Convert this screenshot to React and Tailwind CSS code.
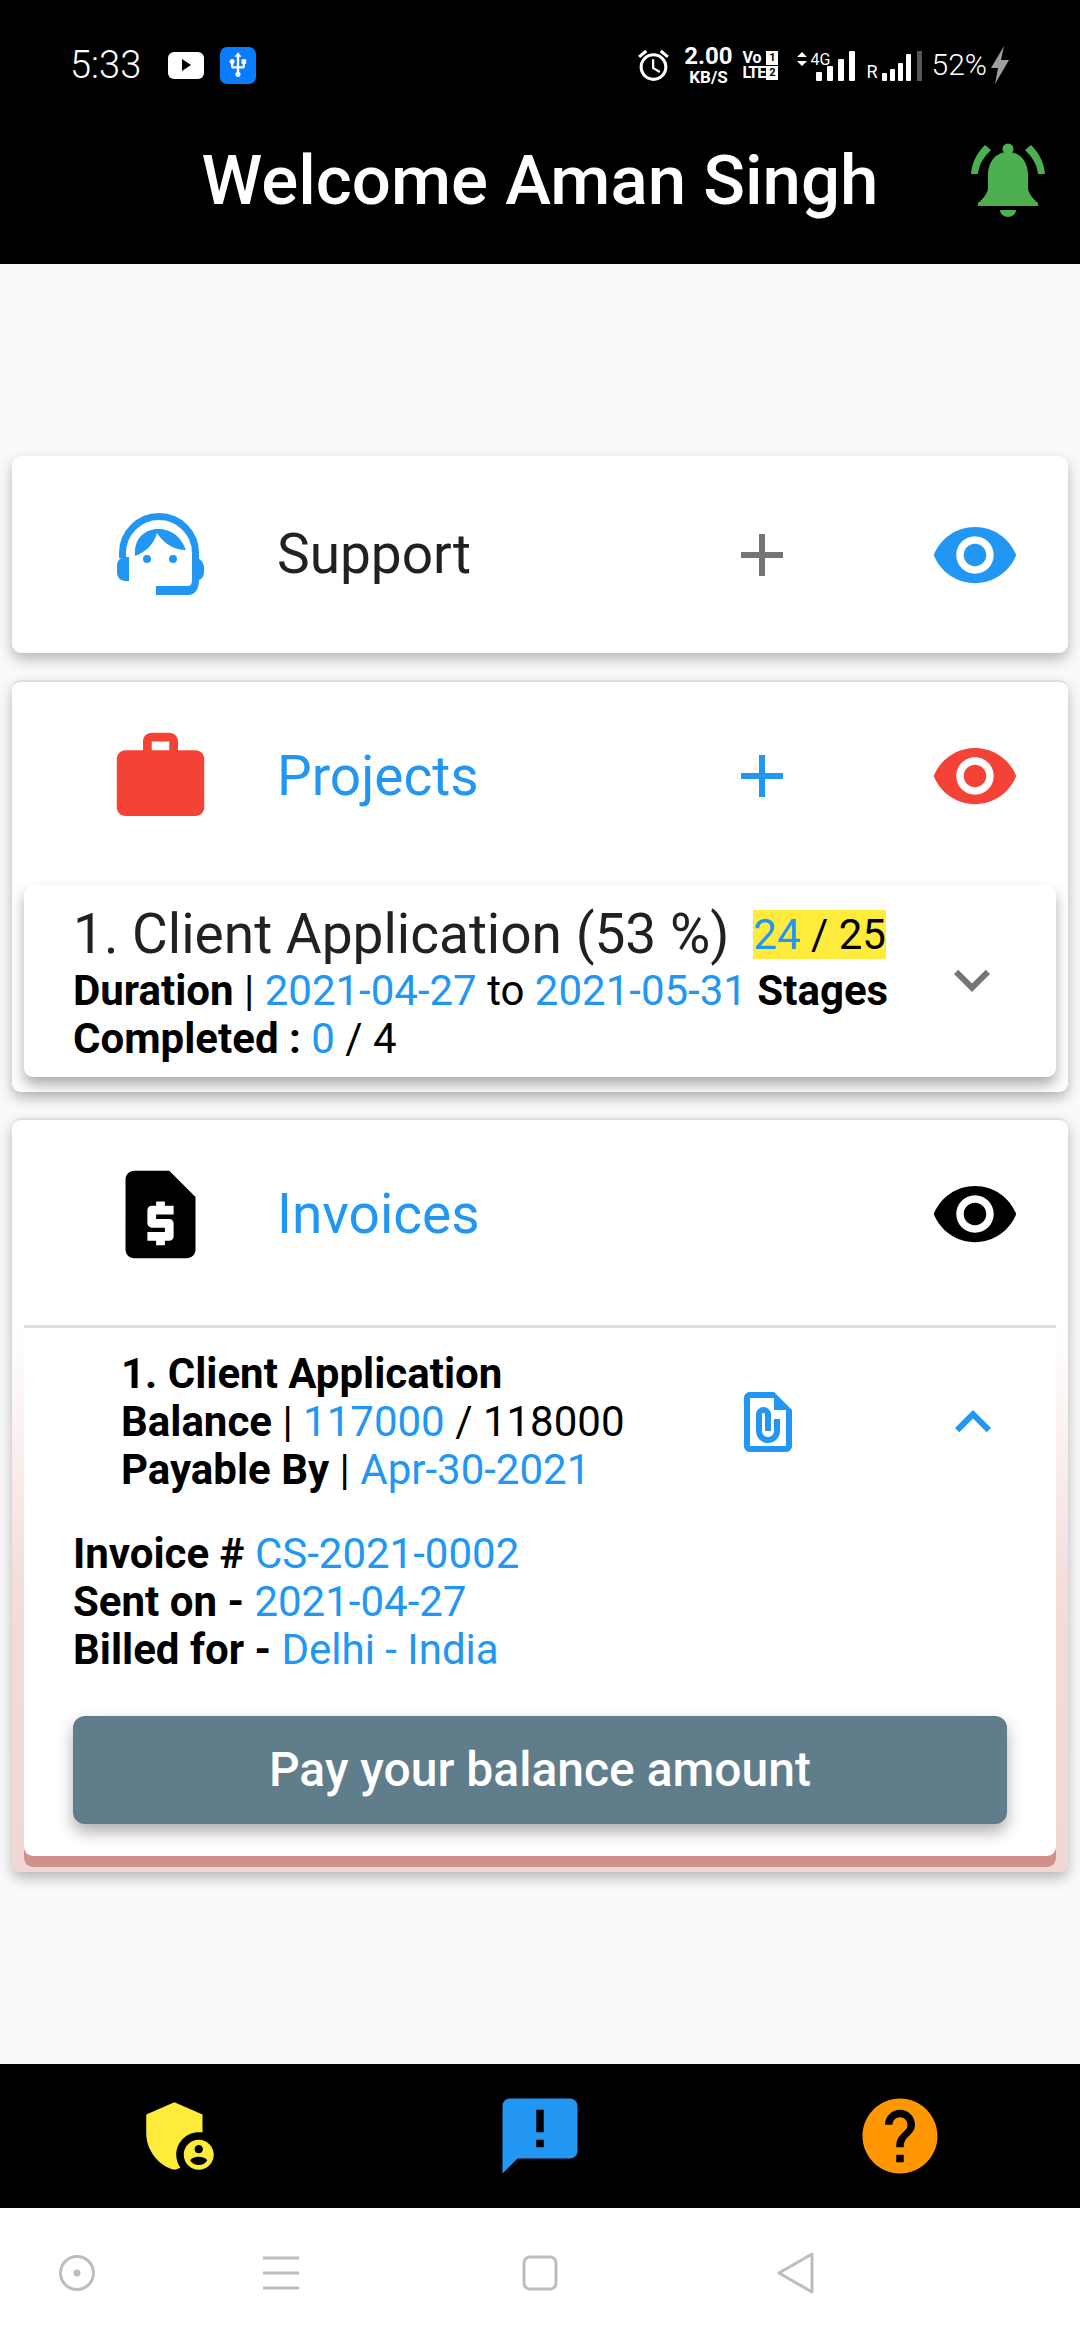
import React from 'react';
import {
  MdAdd,
  MdAdminPanelSettings,
  MdAnnouncement,
  MdExpandLess,
  MdExpandMore,
  MdHelp,
  MdOutlineAlarm,
  MdOutlineFilePresent,
  MdUsb,
  MdVisibility,
  MdWork,
} from 'react-icons/md';

const Bars = ({ heights, wide }) => (
  <div className={`flex items-end ${wide ? 'gap-[5px]' : 'gap-[3px]'}`}>
    {heights.map((h, i) => (
      <div key={i} className={`${wide ? 'w-[6px]' : 'w-[5px]'} bg-white rounded-[1px]`} style={{ height: h }} />
    ))}
  </div>
);

const StatusBar = () => (
  <div className="h-[96px] pt-[34px] pl-[70px] pr-[70px] flex items-center text-white">
    <span className="text-[38px] leading-none w-[98px] font-light">5:33</span>
    <div className="w-[36px] h-[27px] bg-white rounded-[6px] flex items-center justify-center">
      <div className="w-0 h-0 border-y-[6px] border-y-transparent border-l-[9px] border-l-black" />
    </div>
    <div className="w-[36px] h-[37px] ml-[16px] bg-[#0a7cff] rounded-[7px] flex items-center justify-center">
      <MdUsb size={28} />
    </div>
    <div className="flex-1" />
    <MdOutlineAlarm size={37} />
    <div className="ml-[9px] w-[54px] flex flex-col items-center font-bold leading-none">
      <span className="text-[24px]">2.00</span>
      <span className="text-[17px] mt-[1px]">KB/S</span>
    </div>
    <div className="ml-[7px] w-[36px] flex flex-col font-bold text-[16px] leading-[15px]">
      <div className="flex justify-between items-center">
        <span>Vo</span>
        <span className="bg-white text-black w-[12px] h-[14px] text-[11px] leading-[14px] text-center">1</span>
      </div>
      <div className="flex justify-between items-center">
        <span className="tracking-[-1px]">LTE</span>
        <span className="bg-white text-black w-[12px] h-[14px] text-[11px] leading-[14px] text-center">2</span>
      </div>
    </div>
    <div className="ml-[38px] mt-[2px] flex items-end">
      <div className="relative">
        <svg width="10" height="14" viewBox="0 0 10 14" fill="#ffffff" className="absolute left-[-19px] top-[1px]">
          <path d="M5 0 L10 5 H0 Z M5 14 L0 9 H10 Z" />
        </svg>
        <span className="absolute left-[-6px] top-[1px] text-[16px] leading-none">4G</span>
        <Bars heights={[9, 15, 22, 30]} wide />
      </div>
      <span className="ml-[11px] text-[18px] leading-none">R</span>
      <div className="ml-[4px]">
        <Bars heights={[8, 12, 18, 27]} />
      </div>
      <div className="w-[5px] h-[30px] bg-[#555555] ml-[6px]" />
    </div>
    <span className="ml-[10px] text-[30px] leading-none font-light">52%</span>
    <svg width="20" height="38" viewBox="0 0 20 38" className="ml-[3px]">
      <path d="M14 0 L1 22 H8 L5 38 L19 14 H11 Z" fill="#9e9e9e" />
    </svg>
  </div>
);

const SupportIcon = () => (
  <svg width="120" height="110" viewBox="0 0 120 110" fill="#2196f3">
    <path d="M22.5 58 V53 A36.5 36.5 0 0 1 95.5 53 V62" fill="none" stroke="#2196f3" strokeWidth="7" />
    <path d="M35 56 C34 40 42 31 56 29 C70 28 81 36 86 50 C75 50 65 45 57 33 C54 44 46 52 35 56 Z" />
    <circle cx="47" cy="59" r="4" />
    <circle cx="73" cy="59" r="4" />
    <path d="M29 57 V81 H26 C20 81 17 77 17 72 V66 C17 60 21 57 26 57 Z" />
    <path d="M92 57 C99 57 104 61 104 68 V72 C104 76 102 79 99 80 C99 89 95 95 88 95 H56 V86 H88 C91 86 92 83 92 80 Z" />
  </svg>
);

const BellIcon = () => (
  <svg width="110" height="110" viewBox="0 0 110 110" fill="#4caf50">
    <circle cx="58" cy="19" r="5.5" />
    <path d="M58 22 C45 22 38 33 38 45 V58 C38 63 32 70 28 73 V76 H88 V73 C84 70 78 63 78 58 V45 C78 33 71 22 58 22 Z" />
    <path d="M50 80 H66 C66 84 62 87 58 87 C54 87 50 84 50 80 Z" />
    <path d="M35 15 L41 20 C34 27 29 34 28 44 H21 C22 32 27 23 35 15 Z" />
    <path d="M81 15 L75 20 C82 27 87 34 88 44 H95 C94 32 89 23 81 15 Z" />
  </svg>
);

const InvoiceIcon = () => (
  <svg width="105" height="105" viewBox="0 0 24 24" fill="#000000">
    <path d="M14,2H6C4.9,2,4.01,2.9,4.01,4L4,20c0,1.1,0.89,2,1.99,2H18c1.1,0,2-0.9,2-2V8L14,2z M15,12h-4v1h3c0.55,0,1,0.45,1,1v3c0,0.55-0.45,1-1,1h-1v1h-2v-1H9v-2h4v-1h-3c-0.55,0-1-0.45-1-1v-3c0-0.55,0.45-1,1-1h1V9h2v1h2V12z" />
  </svg>
);

const CardHeader = ({ icon, title, titleClass, add, eye, short }) => (
  <div className={`${short ? 'h-[188px]' : 'h-[197px]'} flex items-center`}>
    <div className="w-[265px] pl-[31px] flex justify-center">{icon}</div>
    <span className={`text-[55px] leading-none flex-1 ${titleClass}`}>{title}</span>
    {add && <MdAdd size={72} color={add} />}
    <MdVisibility size={90} color={eye} className="ml-[132px] mr-[48px]" />
  </div>
);

const Label = ({ children }) => <span className="font-bold">{children}</span>;
const Blue = ({ children }) => <span className="text-[#2196f3]">{children}</span>;

const App = () => (
  <div className="w-[1080px] h-[2340px] flex flex-col bg-[#fafafa] font-['Roboto',sans-serif] text-[#000000]">
    <div className="bg-black h-[264px]">
      <StatusBar />
      <div className="h-[168px] grid grid-cols-[1fr_auto_1fr] items-center">
        <div />
        <h1 className="text-[69px] leading-none font-medium text-white">Welcome Aman Singh</h1>
        <div className="flex justify-end pr-[20px] pt-[10px]">
          <BellIcon />
        </div>
      </div>
    </div>

    <main className="flex-1 pt-[192px] px-[12px]">
      <section className="bg-white rounded-[9px] shadow-[0_6px_14px_rgba(0,0,0,0.28)]">
        <CardHeader
          icon={<SupportIcon />}
          title="Support"
          titleClass="text-[#212121]"
          add="#757575"
          eye="#2196f3"
        />
      </section>

      <section className="mt-[27px] bg-white rounded-[9px] pb-[15px] border-t-2 border-t-[#dddddd] shadow-[0_6px_14px_rgba(0,0,0,0.28)]">
        <CardHeader
          icon={<MdWork size={105} color="#f44336" />}
          title="Projects"
          titleClass="text-[#2196f3]"
          add="#2196f3"
          eye="#f44336"
          short
        />
        <div className="mx-[12px] mt-[15px] h-[192px] bg-white rounded-[9px] shadow-[0_8px_14px_rgba(0,0,0,0.32)] pl-[49px] pr-[48px] flex items-center">
          <div className="w-[840px] text-[42px] leading-[48px] pt-[2px]">
            <div className="h-[66px] flex items-center">
              <span className="text-[55px] leading-none text-[#212121]">1. Client Application (53 %)</span>
              <span className="ml-[24px] bg-[#ffeb3b] text-[42px] leading-[49px]">
                <Blue>24</Blue> / 25
              </span>
            </div>
            <p>
              <Label>Duration</Label> | <Blue>2021-04-27</Blue> to <Blue>2021-05-31</Blue> <Label>Stages</Label>{' '}
              <Label>Completed :</Label> <Blue>0</Blue> / 4
            </p>
          </div>
          <div className="flex-1 flex justify-end mt-[-2px]">
            <MdExpandMore size={72} color="#757575" />
          </div>
        </div>
      </section>

      <section className="mt-[26px] bg-white rounded-[9px] border-t-2 border-t-[#dddddd] shadow-[0_6px_14px_rgba(0,0,0,0.28)]">
        <CardHeader
          icon={<InvoiceIcon />}
          title="Invoices"
          titleClass="text-[#2196f3]"
          eye="#000000"
          short
        />
        <div className="mt-[17px] px-[12px] pb-[16px] rounded-b-[9px] bg-gradient-to-b from-white via-[#f3dcda] to-[#f0d6d4]">
          <div className="bg-white h-[531px] rounded-b-[9px] border-t-[3px] border-t-[#e0e0e0] shadow-[0_11px_0_#d0918c] px-[49px] pt-[22px] text-[42px] leading-[48px]">
            <div className="flex items-center">
              <div className="pl-[48px] w-[620px]">
                <p><Label>1. Client Application</Label></p>
                <p>
                  <Label>Balance</Label> | <Blue>117000</Blue> / 118000
                </p>
                <p>
                  <Label>Payable By</Label> | <Blue>Apr-30-2021</Blue>
                </p>
              </div>
              <MdOutlineFilePresent size={72} color="#2196f3" className="ml-[39px]" />
              <div className="flex-1 flex justify-end mr-[-2px]">
                <MdExpandLess size={72} color="#2196f3" />
              </div>
            </div>
            <div className="mt-[36px]">
              <p>
                <Label>Invoice #</Label> <Blue>CS-2021-0002</Blue>
              </p>
              <p>
                <Label>Sent on -</Label> <Blue>2021-04-27</Blue>
              </p>
              <p>
                <Label>Billed for -</Label> <Blue>Delhi - India</Blue>
              </p>
            </div>
            <button className="mt-[42px] w-full h-[108px] bg-[#607d8b] rounded-[12px] text-white text-[48px] font-medium shadow-[0_8px_16px_rgba(0,0,0,0.32)]">
              Pay your balance amount
            </button>
          </div>
        </div>
      </section>
    </main>

    <nav className="h-[144px] bg-black grid grid-cols-3 items-center justify-items-center">
      <MdAdminPanelSettings size={90} color="#ffeb3b" />
      <MdAnnouncement size={90} color="#2196f3" />
      <MdHelp size={90} color="#ff9800" />
    </nav>

    <div className="h-[132px] bg-white flex items-center pb-[2px]">
      <svg width="38" height="38" viewBox="0 0 38 38" className="ml-[58px]" fill="none" stroke="#bdbdbd" strokeWidth="3">
        <circle cx="19" cy="19" r="16.5" />
        <circle cx="19" cy="19" r="3.5" fill="#bdbdbd" stroke="none" />
      </svg>
      <svg width="38" height="36" viewBox="0 0 38 36" className="ml-[166px]" stroke="#bdbdbd" strokeWidth="3">
        <path d="M1 3 H37 M1 18 H37 M1 33 H37" />
      </svg>
      <svg width="36" height="36" viewBox="0 0 36 36" className="ml-[222px]" fill="none" stroke="#bdbdbd" strokeWidth="3">
        <rect x="2" y="2" width="32" height="32" rx="6" />
      </svg>
      <svg width="38" height="42" viewBox="0 0 38 42" className="ml-[219px]" fill="none" stroke="#bdbdbd" strokeWidth="3" strokeLinejoin="round">
        <path d="M35 2 V40 L2 21 Z" />
      </svg>
    </div>
  </div>
);

export default App;
